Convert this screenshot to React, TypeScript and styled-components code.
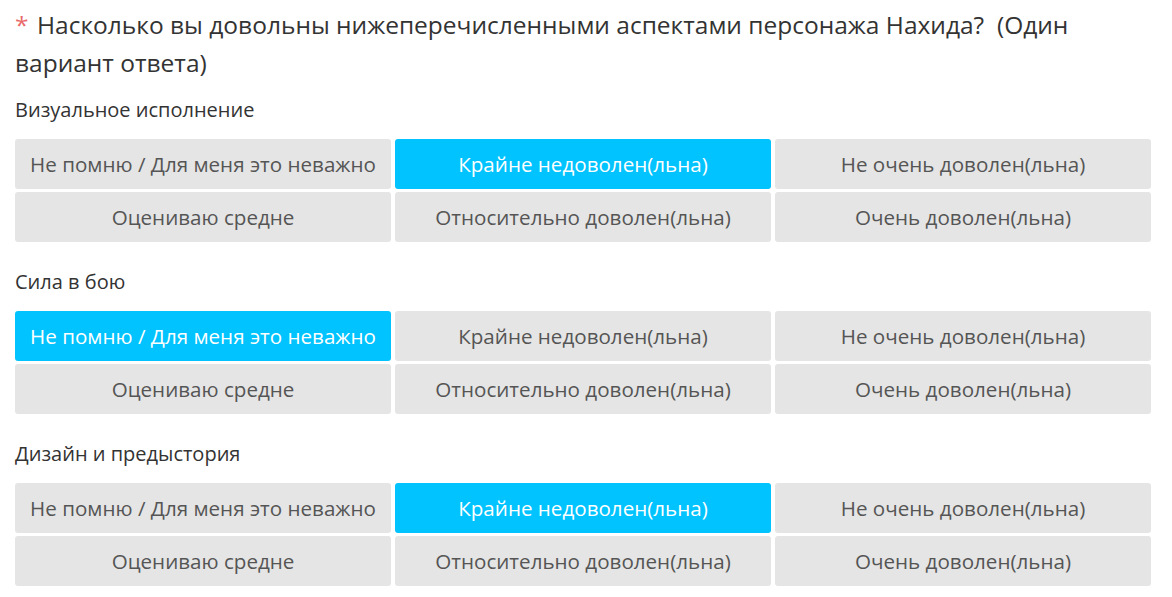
import React from "react";
import styled, { createGlobalStyle } from "styled-components";

const Global = createGlobalStyle`
  body { margin: 0; background: #fff; font-family: "Open Sans", "Noto Sans", sans-serif; }
`;

const Page = styled.div`
  padding: 6px 21px 0 15px;
`;

const Title = styled.div`
  font-size: 24.5px;
  line-height: 38px;
  color: #333;
`;

const Star = styled.span`
  display: inline-block;
  width: 22px;
  color: #e96a6a;
`;

const Section = styled.div`
  margin-top: 15px;
  & + & { margin-top: 27px; }
`;

const Label = styled.div`
  font-size: 20px;
  line-height: 26px;
  color: #333;
  margin-bottom: 16px;
`;

const Grid = styled.div`
  display: grid;
  grid-template-columns: repeat(3, 1fr);
  gap: 3px 4px;
`;

const Option = styled.div<{ $active?: boolean }>`
  height: 50px;
  display: flex;
  align-items: center;
  justify-content: center;
  border-radius: 3px;
  font-size: 20.6px;
  background: ${(p) => (p.$active ? "#00c3ff" : "#e5e5e5")};
  color: ${(p) => (p.$active ? "#fff" : "#555")};
`;

const options = [
  "Не помню / Для меня это неважно",
  "Крайне недоволен(льна)",
  "Не очень доволен(льна)",
  "Оцениваю средне",
  "Относительно доволен(льна)",
  "Очень доволен(льна)",
];

const sections = [
  { label: "Визуальное исполнение", active: 1 },
  { label: "Сила в бою", active: 0 },
  { label: "Дизайн и предыстория", active: 1 },
];

const titleText =
  "Насколько вы довольны нижеперечисленными аспектами персонажа Нахида?\u00a0 (Один вариант ответа)";

export default function App() {
  return (
    <Page>
      <Global />
      <Title>
        <Star>*</Star>
        {titleText}
      </Title>
      {sections.map((s) => (
        <Section key={s.label}>
          <Label>{s.label}</Label>
          <Grid>
            {options.map((o, i) => (
              <Option key={o} $active={i === s.active}>
                {o}
              </Option>
            ))}
          </Grid>
        </Section>
      ))}
    </Page>
  );
}
